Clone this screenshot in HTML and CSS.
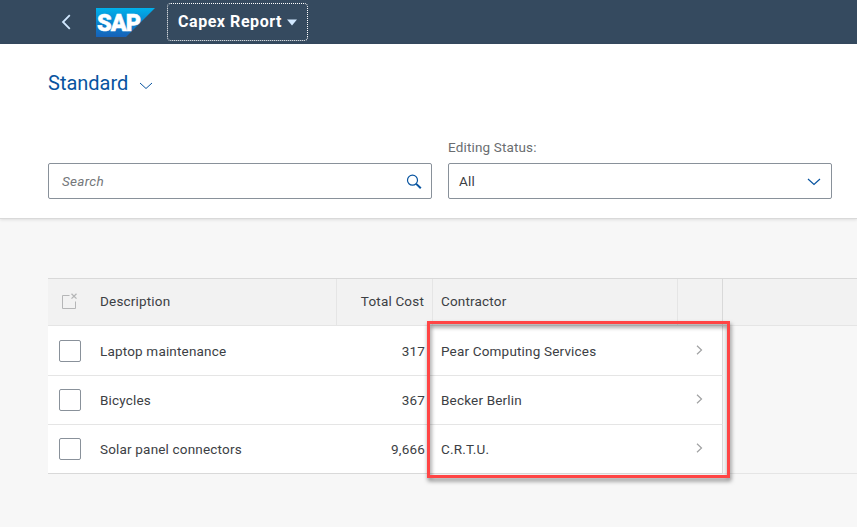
FILE: index.html
```html
<!DOCTYPE html>
<html lang="en">
<head>
<meta charset="utf-8">
<title>Capex Report</title>
<link rel="stylesheet" href="styles.css">
</head>
<body>
<header class="shell">
  <svg class="back" width="10" height="16" viewBox="0 0 10 16"><path d="M8.800 1.200 2 8l6.800 6.800" fill="none" stroke="#d1e8ff" stroke-width="1.800"/></svg>
  <svg class="logo" width="59" height="29" viewBox="0 0 59 29">
    <defs><linearGradient id="sap" x1="0" y1="0" x2="0" y2="1"><stop offset="0" stop-color="#00b1eb"/><stop offset=".5" stop-color="#0a85cf"/><stop offset="1" stop-color="#1661b8"/></linearGradient></defs>
    <path d="M0 0h59L30 29H0z" fill="url(#sap)"/>
    <text class="logo-text" x="1" y="23" textLength="43" lengthAdjust="spacingAndGlyphs">SAP</text>
  </svg>
  <button class="app-title"><span>Capex Report</span><svg width="10" height="7" viewBox="0 0 10 7"><path d="M0 .5h10L5 6.500z" fill="#d1e8ff"/></svg></button>
</header>
<section class="filters">
  <div class="variant"><h1>Standard</h1><svg width="14" height="8" viewBox="0 0 14 8"><path d="m1 1 6 5.500L13 1" fill="none" stroke="#0854a0" stroke-width="1"/></svg></div>
  <div class="fields">
    <div class="field search"><span>Search</span><svg width="16" height="16" viewBox="0 0 16 16" fill="none" stroke="#0854a0"><circle cx="6.500" cy="6.200" r="5" stroke-width="1.200"/><path d="m10.200 9.900 4.600 4.400" stroke-width="2"/></svg></div>
    <div class="group">
      <label>Editing Status:</label>
      <div class="field"><span>All</span><svg width="14" height="8" viewBox="0 0 14 8"><path d="m1 1 6 5.500L13 1" fill="none" stroke="#0854a0" stroke-width="1.200"/></svg></div>
    </div>
  </div>
</section>
<main class="table">
  <div class="row head">
    <div class="sel"><svg width="16" height="16" viewBox="0 0 16 16" fill="none" stroke="#b5b6b7"><path d="M7.500 2.500h-7v13h13v-7"/><path d="m9.500.8 5 4.800m0-4.800-5 4.800" stroke-width="1.300"/></svg></div>
    <div class="desc"><span>Description</span></div>
    <div class="cost"><span>Total Cost</span></div>
    <div class="contractor"><span>Contractor</span></div>
    <div class="nav"></div>
    <div class="rest"></div>
  </div>
  <div class="row">
    <div class="sel"><i class="check"></i></div>
    <div class="desc"><span>Laptop maintenance</span></div>
    <div class="cost"><span>317</span></div>
    <div class="contractor"><span>Pear Computing Services</span></div>
    <div class="nav"><svg width="7" height="10" viewBox="0 0 7 10"><path d="m1 .8 4.500 4.200L1 9.200" fill="none" stroke="#a0a1a2" stroke-width="1.200"/></svg></div>
    <div class="rest"></div>
  </div>
  <div class="row">
    <div class="sel"><i class="check"></i></div>
    <div class="desc"><span>Bicycles</span></div>
    <div class="cost"><span>367</span></div>
    <div class="contractor"><span>Becker Berlin</span></div>
    <div class="nav"><svg width="7" height="10" viewBox="0 0 7 10"><path d="m1 .8 4.500 4.200L1 9.200" fill="none" stroke="#a0a1a2" stroke-width="1.200"/></svg></div>
    <div class="rest"></div>
  </div>
  <div class="row last">
    <div class="sel"><i class="check"></i></div>
    <div class="desc"><span>Solar panel connectors</span></div>
    <div class="cost"><span>9,666</span></div>
    <div class="contractor"><span>C.R.T.U.</span></div>
    <div class="nav"><svg width="7" height="10" viewBox="0 0 7 10"><path d="m1 .8 4.500 4.200L1 9.200" fill="none" stroke="#a0a1a2" stroke-width="1.200"/></svg></div>
    <div class="rest"></div>
  </div>
  <div class="highlight"></div>
</main>
</body>
</html>
```
FILE: styles.css
```css
* { box-sizing: border-box; }
body {
  margin: 0;
  height: 527px;
  overflow: hidden;
  background: #f7f7f7;
  color: #3c4044;
  font: 13.5px/20px Roboto, "Liberation Sans", sans-serif;
  letter-spacing: .18px;
}
svg { display: block; flex: none; }
.shell {
  display: flex;
  align-items: center;
  height: 44px;
  padding-left: 61px;
  background: #354a5f;
}
.logo { margin: 1px 12px 0 25px; }
.logo-text {
  font: 900 23px Roboto, "Liberation Sans", sans-serif;
  letter-spacing: -1px;
  fill: #fff;
  stroke: #fff;
  stroke-width: .5px;
}
.app-title {
  display: flex;
  align-items: center;
  gap: 5px;
  width: 141px;
  height: 38px;
  padding: 0 0 0 10px;
  border: 1px dotted #fff;
  border-radius: 4px;
  background: none;
  color: #fff;
  font: 700 16px/20px Roboto, "Liberation Sans", sans-serif;
  letter-spacing: .55px;
}
.filters {
  height: 175px;
  padding: 25px 25px 0 48px;
  background: #fff;
  border-bottom: 1px solid #d9d9d9;
  box-shadow: 0 1px 3px rgba(0, 0, 0, .1);
}
.variant { display: flex; align-items: center; gap: 11px; height: 28px; color: #0854a0; }
.variant h1 { margin: 0; font-size: 20px; font-weight: 400; line-height: 28px; letter-spacing: 0; }
.variant svg { margin-top: 5px; }
.fields { display: flex; align-items: flex-end; gap: 16px; margin-top: 40px; }
.fields > div { width: 384px; }
.group label { display: block; height: 26px; color: #6a6d70; letter-spacing: .15px; }
.field {
  display: flex;
  align-items: center;
  justify-content: space-between;
  height: 36px;
  padding: 0 10px;
  border: 1px solid #89919a;
  border-radius: 2px;
}
.field svg { margin-top: 1px; }
.search { padding: 0 9px 0 13px; color: #74777a; font-style: italic; letter-spacing: .3px; }
.table { position: relative; margin: 59px 0 0 48px; border-top: 1px solid #d9d9d9; }
.row { display: grid; grid-template-columns: 44px 245px 96px 245px 45px 1fr; height: 49px; }
.row > div { display: flex; align-items: center; border-bottom: 1px solid #e5e5e5; background: #fff; }
.row > .sel { padding-left: 11px; }
.row > .desc { padding-left: 8px; }
.row > .cost { justify-content: flex-end; padding-right: 8px; }
.row > .contractor { padding-left: 8px; }
.row > .nav { padding: 0 0 2px 18px; border-right: 1px solid #d9d9d9; }
.row > .rest { background: #f7f7f7; border-bottom-color: transparent; }
.head { height: 47px; }
.head > div, .head > .rest { background: #f2f2f2; border-bottom-color: #e5e5e5; }
.head > .sel { padding: 0 0 2px 14px; }
.head > .desc, .head > .cost, .head > .contractor { padding-bottom: 2px; border-right: 1px solid #e5e5e5; }
.head + .row { height: 50px; }
.head + .row > .nav { padding-bottom: 1px; }
.last > div, .last > .rest { border-bottom-color: #d9d9d9; }
.last > .rest { border-bottom-color: #e5e5e5; }
.check { width: 22px; height: 22px; border: 1px solid #89919a; border-radius: 2px; background: #fff; }
.highlight {
  position: absolute;
  left: 379px;
  top: 42px;
  width: 303px;
  height: 157px;
  border: 3px solid #ff4545;
  filter: drop-shadow(1px 3px 2px rgba(0, 0, 0, .5));
}
```
